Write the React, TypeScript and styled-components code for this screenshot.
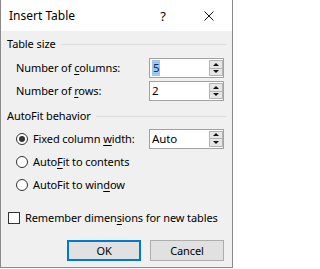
import React from 'react'
import styled, { createGlobalStyle } from 'styled-components'

const GlobalStyle = createGlobalStyle`
  html, body {
    margin: 0;
    padding: 0;
    background: #ffffff;
  }
  body {
    font-family: "Noto Sans", "Open Sans", sans-serif;
    font-size: 11px;
    letter-spacing: -0.1px;
    color: #000000;
  }
`

const Dialog = styled.div`
  width: 233px;
  height: 268px;
  box-sizing: border-box;
  border: 1px solid #8a8a8a;
  border-top: none;
  background: #f0f0f0;
  display: flex;
  flex-direction: column;
`

const TitleBar = styled.div`
  height: 31px;
  background: #ffffff;
  display: flex;
  align-items: center;
  padding-left: 8px;
`

const Title = styled.div`
  flex: 1;
  font-size: 12px;
  letter-spacing: 0;
  line-height: 16px;
  padding-top: 1px;
`

const TitleButton = styled.div`
  width: 46px;
  height: 31px;
  display: flex;
  align-items: center;
  justify-content: center;
  font-size: 13px;
`

const Body = styled.div`
  flex: 1;
  display: flex;
  flex-direction: column;
  padding: 5px 8px 0 6px;
`

const GroupHeader = styled.div<{ $gap: number }>`
  display: flex;
  align-items: center;
  height: 16px;
  line-height: 16px;
  margin-top: ${p => p.$gap}px;
  white-space: nowrap;

  &::after {
    content: '';
    flex: 1;
    height: 1px;
    margin: 0 -2px 0 5px;
    background: #dcdcdc;
  }
`

const FieldRow = styled.div<{ $gap: number }>`
  display: flex;
  align-items: center;
  justify-content: space-between;
  height: 20px;
  margin-top: ${p => p.$gap}px;
  padding-left: 9px;
`

const Label = styled.span`
  line-height: 16px;
  white-space: nowrap;
`

const Key = styled.span`
  text-decoration: underline;
  text-underline-offset: 2px;
`

const SpinBox = styled.div`
  width: 75px;
  height: 20px;
  box-sizing: border-box;
  border: 1px solid #a2a2a2;
  background: #ffffff;
  display: flex;
  flex-shrink: 0;
`

const SpinValue = styled.div`
  flex: 1;
  display: flex;
  align-items: center;
  padding-left: 2px;
  line-height: 16px;
  font-size: 11.5px;
`

const Selected = styled.span`
  background: #9fc6ec;
  color: #0b2b63;
  padding: 0 1px;
`

const SpinButtons = styled.div`
  width: 14px;
  margin: 1px 0 1px 0;
  display: flex;
  flex-direction: column;
`

const SpinButton = styled.div<{ $down?: boolean }>`
  flex: 1;
  box-sizing: border-box;
  border: 1px solid #b4b4b4;
  border-top-width: ${p => (p.$down ? 0 : 1)}px;
  background: #e6e6e6;
  display: flex;
  align-items: center;
  justify-content: center;

  &::before {
    content: '';
    width: 0;
    height: 0;
    border-left: 3px solid transparent;
    border-right: 3px solid transparent;
    ${p =>
      p.$down
        ? 'border-top: 3px solid #111111;'
        : 'border-bottom: 3px solid #111111;'}
  }
`

const OptionRow = styled.div<{ $gap: number }>`
  display: flex;
  align-items: center;
  height: 21px;
  margin-top: ${p => p.$gap}px;
  padding-left: 9px;
`

const Radio = styled.span<{ $checked?: boolean }>`
  width: 12px;
  height: 12px;
  box-sizing: border-box;
  border: 1px solid #333333;
  border-radius: 50%;
  background: #ffffff;
  display: flex;
  align-items: center;
  justify-content: center;
  margin-right: 5px;
  flex-shrink: 0;

  &::after {
    content: '';
    width: 6px;
    height: 6px;
    border-radius: 50%;
    background: ${p => (p.$checked ? '#333333' : 'transparent')};
  }
`

const Checkbox = styled.span`
  width: 12px;
  height: 12px;
  box-sizing: border-box;
  border: 1px solid #333333;
  background: #ffffff;
  margin: 0 5px 0 1px;
  flex-shrink: 0;
`

const OptionText = styled.span`
  flex: 1;
  line-height: 16px;
  white-space: nowrap;
`

const CheckRow = styled.div`
  display: flex;
  align-items: center;
  height: 20px;
  margin-top: 13px;
`

const ButtonBar = styled.div`
  display: flex;
  justify-content: flex-end;
  gap: 9px;
  margin-top: 12px;
`

const Button = styled.div<{ $default?: boolean }>`
  width: 74px;
  height: 21px;
  box-sizing: border-box;
  border: ${p => (p.$default ? '2px solid #0078d7' : '1px solid #adadad')};
  background: #e1e1e1;
  display: flex;
  align-items: center;
  justify-content: center;
  line-height: 16px;
`

const Spinner: React.FC<{ children: React.ReactNode }> = ({ children }) => (
  <SpinBox>
    <SpinValue>{children}</SpinValue>
    <SpinButtons>
      <SpinButton />
      <SpinButton $down />
    </SpinButtons>
  </SpinBox>
)

const App: React.FC = () => {
  return (
    <>
      <GlobalStyle />
      <Dialog>
        <TitleBar>
          <Title>Insert Table</Title>
          <TitleButton>?</TitleButton>
          <TitleButton>
            <svg width="10" height="10" viewBox="0 0 10 10">
              <path d="M0.5 0.5 L9.5 9.5 M9.5 0.5 L0.5 9.5" stroke="#111" strokeWidth="1" />
            </svg>
          </TitleButton>
        </TitleBar>
        <Body>
          <GroupHeader $gap={0}>Table size</GroupHeader>
          <FieldRow $gap={6}>
            <Label>Number of <Key>c</Key>olumns:</Label>
            <Spinner><Selected>5</Selected></Spinner>
          </FieldRow>
          <FieldRow $gap={3}>
            <Label>Number of <Key>r</Key>ows:</Label>
            <Spinner>2</Spinner>
          </FieldRow>
          <GroupHeader $gap={7}>AutoFit behavior</GroupHeader>
          <OptionRow $gap={4}>
            <Radio $checked />
            <OptionText>Fixed column <Key>w</Key>idth:</OptionText>
            <Spinner>Auto</Spinner>
          </OptionRow>
          <OptionRow $gap={2}>
            <Radio />
            <OptionText>Auto<Key>F</Key>it to contents</OptionText>
          </OptionRow>
          <OptionRow $gap={2}>
            <Radio />
            <OptionText>AutoFit to win<Key>d</Key>ow</OptionText>
          </OptionRow>
          <CheckRow>
            <Checkbox />
            <OptionText>Remember dimen<Key>s</Key>ions for new tables</OptionText>
          </CheckRow>
          <ButtonBar>
            <Button $default>OK</Button>
            <Button>Cancel</Button>
          </ButtonBar>
        </Body>
      </Dialog>
    </>
  )
}

export default App
